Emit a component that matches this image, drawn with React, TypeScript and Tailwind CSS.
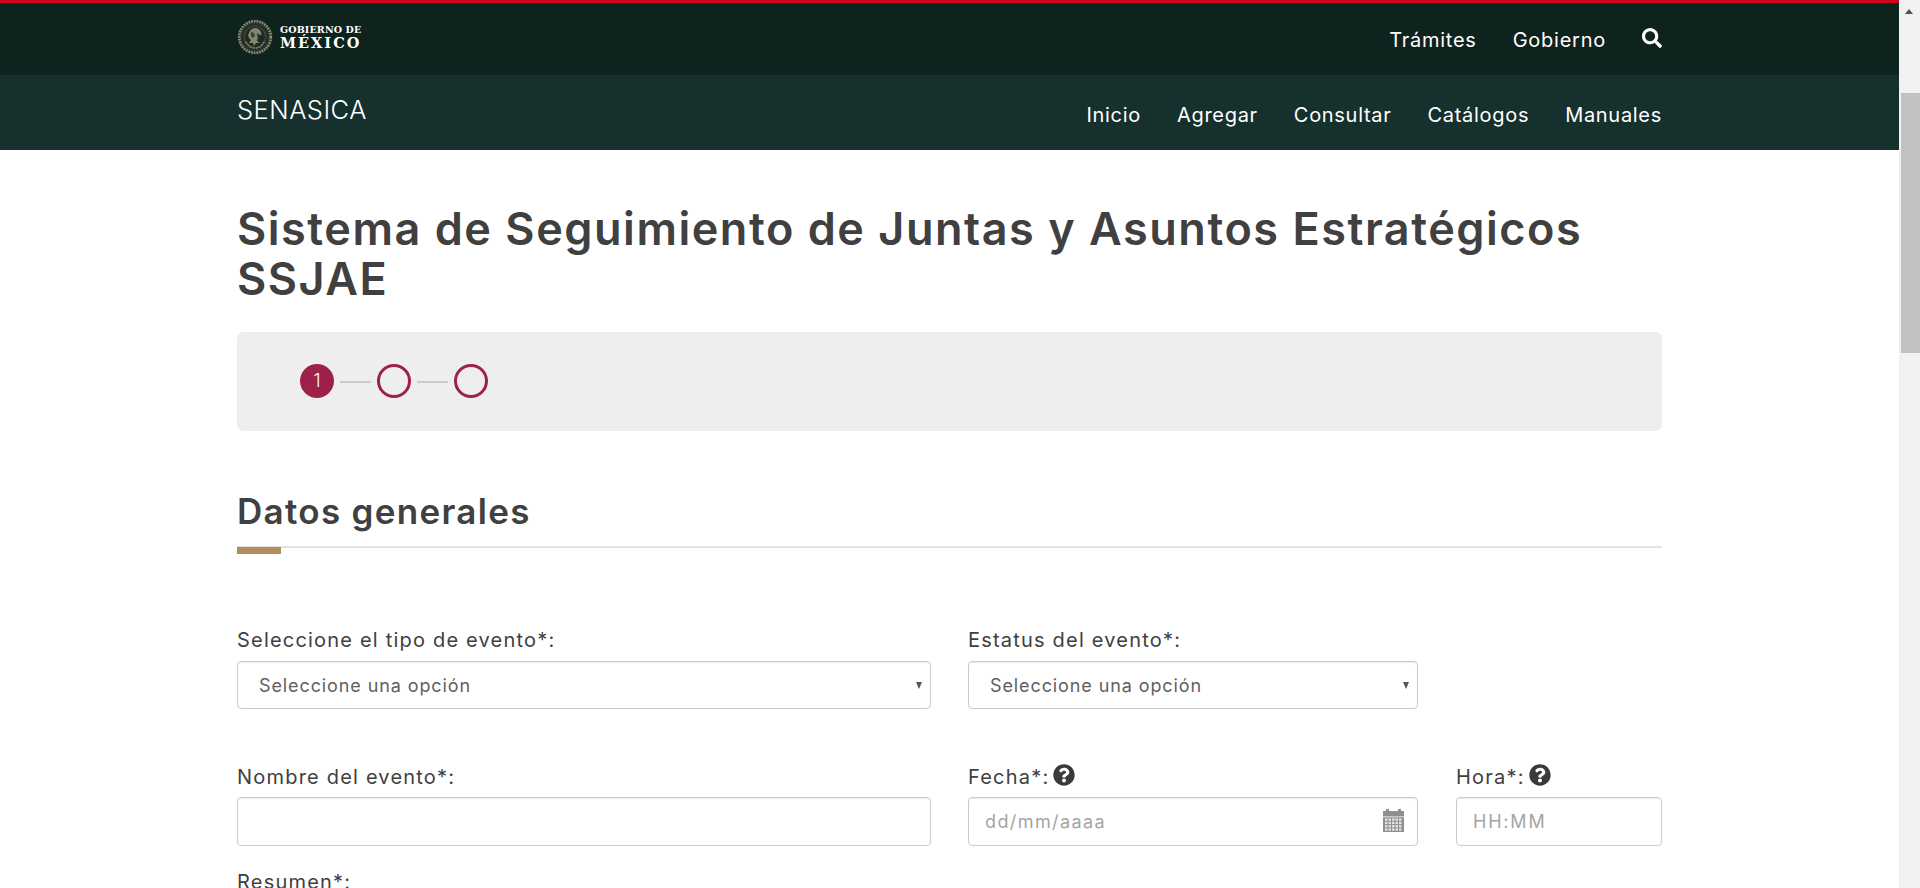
import { FaSearch, FaQuestionCircle } from "react-icons/fa";

const font = { fontFamily: "Inter, 'Noto Sans', sans-serif" };

function Seal() {
  const ticks = Array.from({ length: 40 }, (_, i) => i * 9);
  return (
    <svg width="36" height="36" viewBox="0 0 36 36" className="shrink-0">
      <circle cx="18" cy="18" r="17.500" fill="#2b332a" />
      <circle cx="18" cy="18" r="15.800" fill="none" stroke="#8e8f78" strokeWidth="2.600" strokeDasharray="1.600 1.100" />
      <circle cx="18" cy="18" r="12.600" fill="#1d2a24" />
      {ticks.map((a) => (
        <rect key={a} x="17.500" y="6.500" width="1" height="1.500" fill="#55594b" transform={`rotate(${a} 18 18)`} />
      ))}
      <path d="M11 17c1-5 4-8 7-8 4 0 6 3 7 7-2-1-3 0-4 2l-1 4 3 2-4 0-2 3-1-3-4 0 2-3c-2-1-2-3-3-4z" fill="#85866f" />
      <path d="M14 13l3 1 1 3-2 2-2-2zM20 14l2 1 0 3-2 0z" fill="#3a4136" />
      <path d="M9 23c2 4 5 6 9 6s7-2 9-6" stroke="#7f806b" strokeWidth="1.800" strokeDasharray="2 1" fill="none" />
    </svg>
  );
}

function CalendarIcon() {
  const cells = [];
  for (let r = 0; r < 4; r++) {
    for (let c = 0; c < 5; c++) {
      cells.push(<rect key={`${r}-${c}`} x={2 + c * 3.5} y={9.500 + r * 3.300} width="2.500" height="2.300" fill="#e4e4e4" />);
    }
  }
  return (
    <svg width="21" height="23" viewBox="0 0 21 23" className="absolute right-[14px] top-[12px]">
      <rect x="3" y="0" width="3" height="3" fill="#8f8f8f" />
      <rect x="15" y="0" width="3" height="3" fill="#8f8f8f" />
      <rect x="0" y="2" width="21" height="5.500" fill="#8f8f8f" />
      <rect x="0" y="8.300" width="21" height="14.700" fill="#8f8f8f" />
      {cells}
    </svg>
  );
}

function Label({ children, help }: { children: string; help?: boolean }) {
  return (
    <label className="flex h-[27px] items-center text-[20px] tracking-[1.200px] text-[#404041]">
      <span>{children}</span>
      {help && <FaQuestionCircle className="mb-[4px] ml-[4px] text-[22px] text-[#3a3a3a]" />}
    </label>
  );
}

function Select() {
  return (
    <div className="relative mt-[8px] w-full">
      <select
        className="h-[48px] w-full appearance-none rounded-[4px] border border-[#cccccc] bg-white pl-[21px] text-[18px] tracking-[0.900px] text-[#5f5f5f] shadow-[inset_0_1px_1px_rgba(0,0,0,0.075)]"
        defaultValue="a"
      >
        <option value="a">Seleccione una opción</option>
      </select>
      <span className="absolute right-[9px] top-[21px] h-0 w-0 border-x-[3.500px] border-t-[7px] border-x-transparent border-t-[#555]" />
    </div>
  );
}

export default function App() {
  return (
    <div className="flex h-[888px] overflow-hidden bg-white" style={font}>
      <div className="min-w-0 flex-1">
        <header className="border-t-[3px] border-[#d0021b]">
          <div className="h-[72px] bg-[#0f231e]">
            <div className="mx-auto flex h-full w-[1425px] items-start justify-between">
              <div className="mt-[16px] flex items-center gap-[7px]">
                <Seal />
                <div className="mt-[1px] font-bold leading-none text-white" style={{ fontFamily: "'DejaVu Serif', serif" }}>
                  <div className="text-[9.500px] tracking-[0.150px]">GOBIERNO DE</div>
                  <div className="mt-[2px] text-[14.500px] tracking-[2px]">MÉXICO</div>
                </div>
              </div>
              <nav className="mt-[22px] flex items-center gap-[36px] text-[20px] tracking-[0.750px] text-white">
                <a>Trámites</a>
                <a>Gobierno</a>
                <FaSearch className="mb-[4px] text-[20px]" />
              </nav>
            </div>
          </div>
          <div className="h-[75px] bg-[#16312d]">
            <div className="mx-auto flex h-full w-[1425px] items-start justify-between text-white">
              <div className="mt-[16px] text-[25.500px] font-light tracking-[0.500px]">SENASICA</div>
              <nav className="mt-[25px] flex gap-[36px] text-[20px] tracking-[0.700px]">
                <a>Inicio</a>
                <a>Agregar</a>
                <a>Consultar</a>
                <a>Catálogos</a>
                <a>Manuales</a>
              </nav>
            </div>
          </div>
        </header>
        <main className="mx-auto w-[1425px] text-[#404041]">
          <h1 className="mt-[54px] text-[45px] font-semibold leading-[50px] tracking-[1.530px]">
            Sistema de Seguimiento de Juntas y Asuntos Estratégicos SSJAE
          </h1>
          <div className="mt-[28px] flex h-[99px] items-center rounded-[6px] bg-[#eeeeee] pb-[2px] pl-[63px]">
            <span className="flex h-[34px] w-[34px] items-center justify-center rounded-full bg-[#9d2148] text-[18px] font-light text-white">1</span>
            <span className="mx-[6px] mt-[2px] h-[2px] w-[31px] bg-[#cccccc]" />
            <span className="h-[34px] w-[34px] rounded-full border-[3px] border-[#9d2148]" />
            <span className="mx-[6px] mt-[2px] h-[2px] w-[31px] bg-[#cccccc]" />
            <span className="h-[34px] w-[34px] rounded-full border-[3px] border-[#9d2148]" />
          </div>
          <h2 className="mt-[58px] text-[35px] font-semibold leading-[44px] tracking-[1.300px]">Datos generales</h2>
          <div className="relative mt-[13px] h-[2px] bg-[#e3e3e3]">
            <span className="absolute left-0 top-[1px] h-[7px] w-[44px] bg-[#b38e5d]" />
          </div>
          <div className="mt-[78px] flex gap-[37px]">
            <div className="w-[694px]">
              <Label>Seleccione el tipo de evento*:</Label>
              <Select />
            </div>
            <div className="w-[450px]">
              <Label>Estatus del evento*:</Label>
              <Select />
            </div>
          </div>
          <div className="mt-[54px] flex gap-[37px]">
            <div className="w-[694px]">
              <Label>Nombre del evento*:</Label>
              <input className="mt-[7px] h-[49px] w-full rounded-[4px] border border-[#cccccc] shadow-[inset_0_1px_1px_rgba(0,0,0,0.075)]" />
            </div>
            <div className="w-[450px]">
              <Label help>Fecha*:</Label>
              <div className="relative mt-[7px]">
                <input
                  placeholder="dd/mm/aaaa"
                  className="h-[49px] w-full rounded-[4px] border border-[#cccccc] pl-[16px] text-[18px] tracking-[1.400px] shadow-[inset_0_1px_1px_rgba(0,0,0,0.075)] placeholder:text-[#a5a5a5]"
                />
                <CalendarIcon />
              </div>
            </div>
            <div className="ml-px w-[206px]">
              <Label help>Hora*:</Label>
              <input
                placeholder="HH:MM"
                className="mt-[7px] h-[49px] w-full rounded-[4px] border border-[#cccccc] pl-[16px] text-[18px] tracking-[1.800px] shadow-[inset_0_1px_1px_rgba(0,0,0,0.075)] placeholder:text-[#a5a5a5]"
              />
            </div>
          </div>
          <div className="mt-[22px]">
            <Label>Resumen*:</Label>
          </div>
        </main>
      </div>
      <div className="relative h-full w-[21px] shrink-0 bg-[#f1f1f1]">
        <span className="absolute left-[6px] top-[9px] h-0 w-0 border-x-[4.500px] border-b-[5px] border-x-transparent border-b-[#505050]" />
        <div className="absolute left-[2px] top-[93px] h-[260px] w-[19px] bg-[#c1c1c1]" />
      </div>
    </div>
  );
}
